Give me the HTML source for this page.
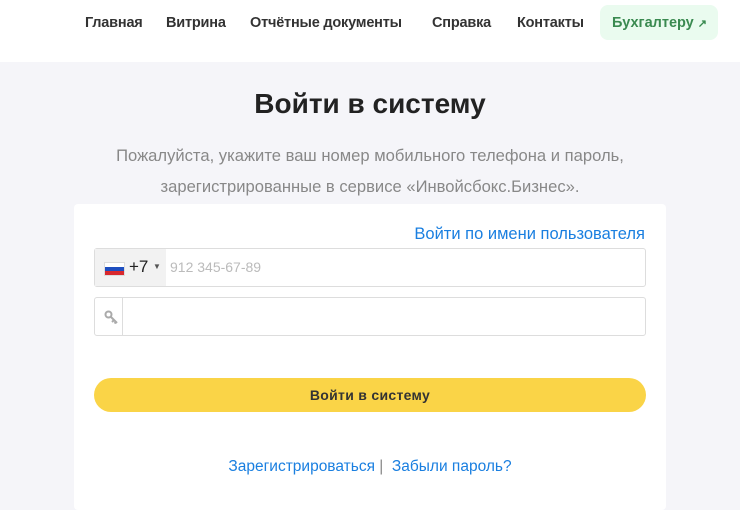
<!DOCTYPE html>
<html><head><meta charset="utf-8"><style>
*{box-sizing:border-box;margin:0;padding:0}
body{width:740px;height:510px;overflow:hidden;background:#f5f5f9;font-family:"Liberation Sans",sans-serif}
.top{position:absolute;left:0;top:0;width:740px;height:62px;background:#fff}
.nav{position:absolute;top:15px;font-size:14.5px;font-weight:bold;color:#333;letter-spacing:-0.2px}
.btn{position:absolute;left:600px;top:5px;width:118px;height:35px;background:#eafbef;border-radius:8px;color:#3a8a50;font-weight:bold;font-size:14.5px;padding:10px 0 0 12px}
h1{position:absolute;left:0;width:740px;top:88px;text-align:center;font-size:28px;font-weight:bold;color:#222}
.sub{position:absolute;left:0;width:740px;text-align:center;font-size:16.6px;color:#888}
.card{position:absolute;left:74px;top:204px;width:592px;height:306px;background:#fff;border-radius:4px}
.link{color:#1a7fe0}
.in{position:absolute;left:20px;width:552px;height:39px;border:1px solid #ddd;border-radius:3px;background:#fff}
</style></head><body>
<div class="top">
<span class="nav" style="left:85px">Главная</span>
<span class="nav" style="left:166px">Витрина</span>
<span class="nav" style="left:250px">Отчётные документы</span>
<span class="nav" style="left:432px">Справка</span>
<span class="nav" style="left:517px">Контакты</span>
<div class="btn">Бухгалтеру <span style="font-size:11px">↗</span></div>
</div>
<h1>Войти в систему</h1>
<div class="sub" style="top:146px">Пожалуйста, укажите ваш номер мобильного телефона и пароль,</div>
<div class="sub" style="top:177px">зарегистрированные в сервисе «Инвойсбокс.Бизнес».</div>
<div class="card">
<div class="link" style="position:absolute;right:21px;top:21px;font-size:16.5px">Войти по имени пользователя</div>
<div class="in" style="top:44px">
<div style="position:absolute;left:0;top:0;width:71px;height:37px;background:#f2f2f2"></div>
<div style="position:absolute;left:9px;top:13px;width:21px;height:14px;border:1px solid #ddd">
<div style="height:4px;background:#fff"></div><div style="height:4px;background:#1e4fc0"></div><div style="height:4px;background:#d8282e"></div></div>
<span style="position:absolute;left:34px;top:8px;font-size:17px;color:#222">+7</span>
<span style="position:absolute;left:58px;top:13px;font-size:8px;color:#555">▼</span>
<span style="position:absolute;left:75px;top:10px;font-size:14px;color:#bbb">912 345-67-89</span>
</div>
<div class="in" style="top:93px">
<div style="position:absolute;left:27px;top:0;width:1px;height:37px;background:#ddd"></div>
<svg style="position:absolute;left:9px;top:12px" width="14" height="14" viewBox="0 0 14 14"><circle cx="4.5" cy="4.5" r="3" fill="none" stroke="#aaa" stroke-width="2"/><path d="M7 7l6 6M10 10l-2 2M12 12l-1.5 1.5" stroke="#aaa" stroke-width="2"/></svg>
</div>
<div style="position:absolute;left:20px;top:174px;width:552px;height:34px;background:#fad447;border-radius:17px;text-align:center;line-height:34px;font-size:14px;font-weight:bold;color:#333;letter-spacing:.3px">Войти в систему</div>
<div style="position:absolute;left:0;width:592px;top:254px;text-align:center;font-size:15.5px"><span class="link">Зарегистрироваться</span><span style="color:#888"> | &nbsp;</span><span class="link">Забыли пароль?</span></div>
</div>
</body></html>
